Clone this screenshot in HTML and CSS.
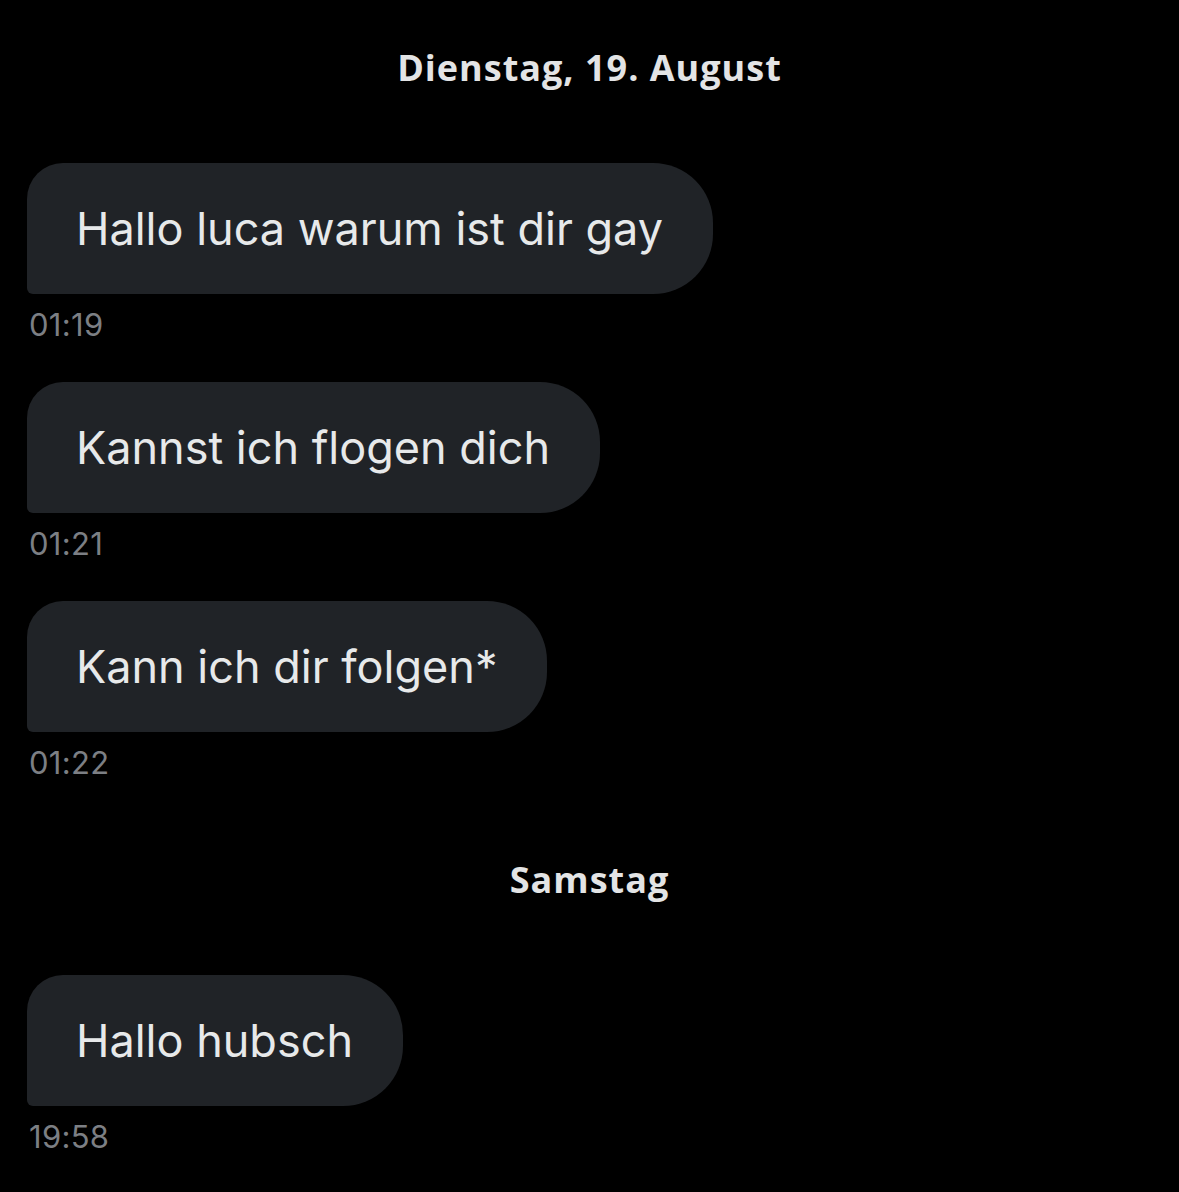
FILE: index.html
```html
<!DOCTYPE html>
<html lang="de">
<head>
<meta charset="UTF-8">
<meta name="viewport" content="width=device-width, initial-scale=1.0">
<title>Nachrichten</title>
<link rel="stylesheet" href="styles.css">
</head>
<body>
  <!-- Chatverlauf -->
  <main class="chat">
    <div class="day-label">Dienstag, 19. August</div>

    <div class="msg">
      <div class="bubble">Hallo luca warum ist dir gay</div>
      <time class="msg-time">01:19</time>
    </div>

    <div class="msg">
      <div class="bubble">Kannst ich flogen dich</div>
      <time class="msg-time">01:21</time>
    </div>

    <div class="msg">
      <div class="bubble">Kann ich dir folgen*</div>
      <time class="msg-time">01:22</time>
    </div>

    <div class="day-label">Samstag</div>

    <div class="msg">
      <div class="bubble">Hallo hubsch</div>
      <time class="msg-time">19:58</time>
    </div>
  </main>
</body>
</html>
```

FILE: styles.css
```css
html, body {
  margin: 0;
  padding: 0;
  background-color: #000;
}

body {
  font-family: Inter, 'Noto Sans', sans-serif;
  color: #e7e9ea;
}

.chat {
  display: flex;
  flex-direction: column;
  padding: 8px 27px 0 27px;
}

/* Datumstrenner */
.day-label {
  margin: 38px 0 73px;
  text-align: center;
  font-family: 'Open Sans', sans-serif;
  font-weight: 700;
  font-size: 36px;
  line-height: 44px;
  letter-spacing: 1px;
  color: #e3e4e5;
}

.msg {
  display: flex;
  flex-direction: column;
  align-items: flex-start;
  margin-bottom: 40px;
}

.bubble {
  background-color: #202327;
  border-radius: 36px 60px 60px 6px;
  padding: 40px 50px 40px 49px;
  font-size: 45px;
  line-height: 51px;
  color: #e7e9ea;
}

.msg-time {
  margin-top: 14px;
  padding-left: 2px;
  font-size: 31px;
  line-height: 34px;
  letter-spacing: 0.3px;
  color: #7c7f84;
}
```
